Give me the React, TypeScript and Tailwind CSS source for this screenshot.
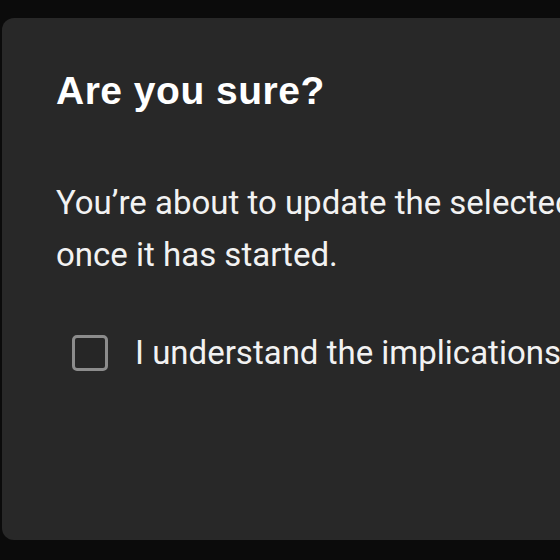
export default function App() {
  return (
    <div className="w-[560px] h-[560px] overflow-hidden bg-[#0b0b0b] pt-[18px] pl-[2px]">
      <div className="w-[760px] h-[522px] rounded-[12px] bg-[#282828] pl-[54px] pt-[53px] flex flex-col">
        <h2 className="text-[39px] leading-[40px] font-bold text-white tracking-[0.5px]" style={{ fontFamily: '"Liberation Sans", Arial, sans-serif' }}>
          Are you sure?
        </h2>
        <div className="mt-[66px] text-[33px] leading-[52px] text-[#f2f2f2]" style={{ fontFamily: 'Roboto, "Noto Sans", sans-serif' }}>
          <div className="whitespace-nowrap">You’re about to update the selected items. This action cannot be undone</div>
          <div className="whitespace-nowrap">once it has started.</div>
        </div>
        <div className="mt-[54px] ml-[16px] flex items-center gap-[27px]">
          <div className="shrink-0 w-[36px] h-[36px] rounded-[5px] border-[3px] border-[#8c8c8c] bg-[#262626]" />
          <span className="whitespace-nowrap text-[33px] leading-[36px] text-[#f2f2f2]" style={{ fontFamily: 'Roboto, "Noto Sans", sans-serif' }}>
            I understand the implications of this change
          </span>
        </div>
      </div>
    </div>
  );
}
